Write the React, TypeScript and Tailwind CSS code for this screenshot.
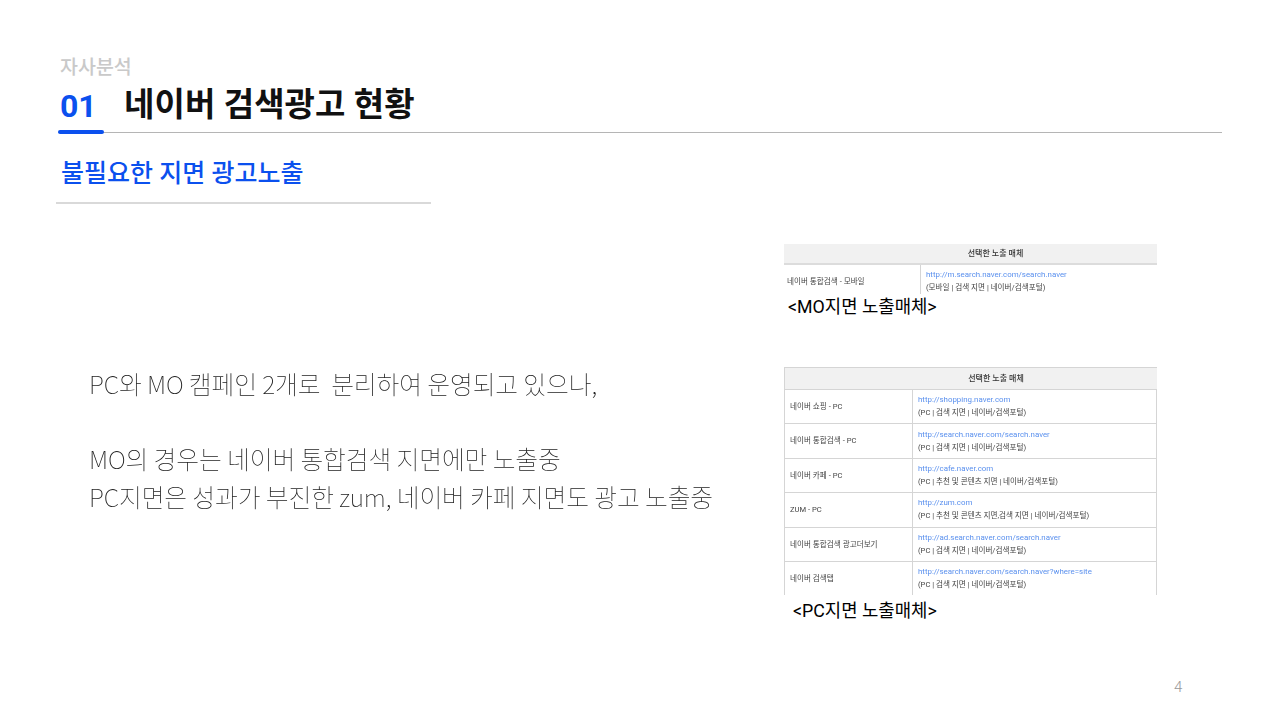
import React from 'react';

const FONT = '[font-family:Roboto,"Noto_Sans_CJK_KR",sans-serif]';

type MediaRow = {
  name: string;
  url: string;
  info: string;
};

const pcRows: MediaRow[] = [
  { name: '네이버 쇼핑 - PC', url: 'http://shopping.naver.com', info: '(PC | 검색 지면 | 네이버/검색포털)' },
  { name: '네이버 통합검색 - PC', url: 'http://search.naver.com/search.naver', info: '(PC | 검색 지면 | 네이버/검색포털)' },
  { name: '네이버 카페 - PC', url: 'http://cafe.naver.com', info: '(PC | 추천 및 콘텐츠 지면 | 네이버/검색포털)' },
  { name: 'ZUM - PC', url: 'http://zum.com', info: '(PC | 추천 및 콘텐츠 지면,검색 지면 | 네이버/검색포털)' },
  { name: '네이버 통합검색 광고더보기', url: 'http://ad.search.naver.com/search.naver', info: '(PC | 검색 지면 | 네이버/검색포털)' },
  { name: '네이버 검색탭', url: 'http://search.naver.com/search.naver?where=site', info: '(PC | 검색 지면 | 네이버/검색포털)' },
];

const CellLink: React.FC<{ url: string; info: string }> = ({ url, info }) => (
  <div className="flex flex-col gap-[3px] leading-[10px]">
    <span className="text-[#5a90ee] text-[7.9px]">{url}</span>
    <span className="text-[#444]">{info}</span>
  </div>
);

export default function App() {
  return (
    <div className={`${FONT} w-[1280px] h-[720px] bg-white overflow-hidden flex flex-col`}>
      {/* Header */}
      <div className="pt-[56px] pl-[60px] text-[19.5px] leading-[24px] font-medium text-[#c9c9c9]">자사분석</div>
      <div className="relative ml-[58px] mr-[58px] h-[53px] border-b border-[#b5b5b5] flex items-center pl-[2px] pb-[3px]">
        <span className="w-[64px] text-[32px] font-bold text-[#0b50ee] pt-[2px]">01</span>
        <span className="text-[33px] font-bold text-[#111] tracking-[0.1px]">네이버 검색광고 현황</span>
        <div className="absolute left-0 bottom-[-2px] w-[46px] h-[4px] rounded-full bg-[#0b50ee]" />
      </div>
      <div className="ml-[56px] w-[375px] h-[71px] border-b-2 border-[#d9d9d9] pl-[5px] pt-[23px] text-[25px] leading-[36px] font-medium text-[#0b50ee]">
        불필요한 지면 광고노출
      </div>

      {/* Body */}
      <div className="flex flex-1">
        <div className="w-[784px] pl-[89px] pt-[161px] [font-family:'Noto_Sans_CJK_KR',sans-serif] text-[24.8px] leading-[37.5px] font-thin text-[#222] tracking-[-0.12px] whitespace-pre [will-change:transform]">
          <p>PC와 MO 캠페인 2개로  분리하여 운영되고 있으나,</p>
          <p>&nbsp;</p>
          <p>MO의 경우는 네이버 통합검색 지면에만 노출중</p>
          <p>PC지면은 성과가 부진한 zum, 네이버 카페 지면도 광고 노출중</p>
        </div>

        <div className="w-[373px] pt-[40px] flex flex-col">
          {/* MO table */}
          <div className="text-[7.6px] blur-[0.4px]">
            <div className="h-[21px] pl-[50px] text-[8px] bg-[#f1f1f1] border-b-2 border-[#dcdcdc] flex items-center justify-center font-medium text-[#333]">
              선택한 노출 매체
            </div>
            <div className="h-[29px] flex">
              <div className="w-[137px] border-r border-[#d5d5d5] pl-[3px] pt-[12px] leading-[10px] text-[#444]">네이버 통합검색 - 모바일</div>
              <div className="pl-[5px] pt-[5px]">
                <CellLink url="http://m.search.naver.com/search.naver" info="(모바일 | 검색 지면 | 네이버/검색포털)" />
              </div>
            </div>
          </div>
          <div className="pl-[4px] mt-[1px] text-[17.8px] leading-[24px] text-black">&lt;MO지면 노출매체&gt;</div>

          {/* PC table */}
          <div className="mt-[48px] text-[7.6px] border-l border-t border-[#d5d5d5] h-[228px] overflow-hidden blur-[0.4px]">
            <div className="h-[22px] pl-[50px] text-[8px] bg-[#f1f1f1] border-b border-[#d5d5d5] flex items-center justify-center font-medium text-[#333]">
              선택한 노출 매체
            </div>
            {pcRows.map((row) => (
              <div key={row.name} className="h-[34.4px] flex border-b border-r border-[#d5d5d5]">
                <div className="w-[128px] border-r border-[#d5d5d5] pl-[5px] flex items-center text-[#444]">{row.name}</div>
                <div className="pl-[5px] flex items-center">
                  <CellLink url={row.url} info={row.info} />
                </div>
              </div>
            ))}
          </div>
          <div className="pl-[9px] mt-[4px] text-[17.8px] leading-[24px] text-black">&lt;PC지면 노출매체&gt;</div>

          <div className="relative">
            <span className="absolute left-[390px] top-[54px] text-[15px] leading-[20px] font-light text-[#999]">4</span>
          </div>
        </div>
      </div>
    </div>
  );
}
